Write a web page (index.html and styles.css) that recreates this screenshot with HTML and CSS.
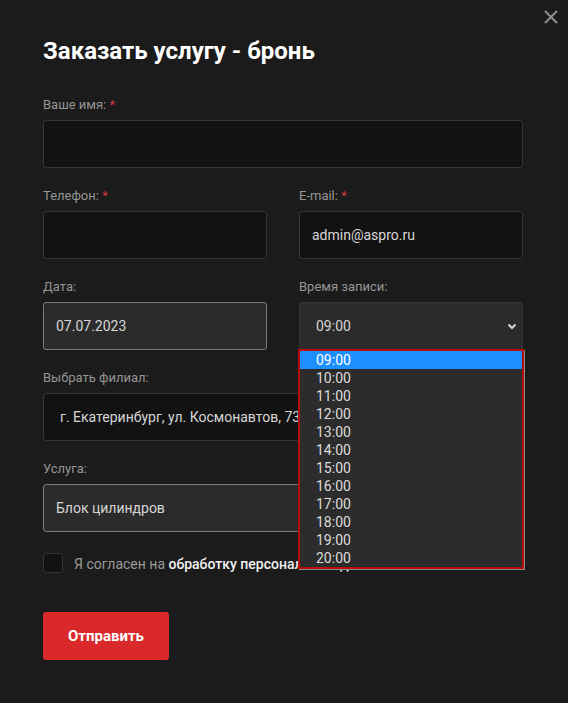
FILE: index.html
```html
<!DOCTYPE html>
<html lang="ru">
<head>
    <meta charset="UTF-8">
    <meta name="viewport" content="width=device-width, initial-scale=1.0">
    <title>Заказать услугу - бронь</title>
    <link rel="stylesheet" href="styles.css">
</head>
<body>
    <div class="popup">
        <a href="javascript:;" class="popup_close">
            <svg width="14" height="14" viewBox="0 0 14 14">
                <path d="M1 1L13 13M13 1L1 13" stroke="#8f8f8f" stroke-width="2" fill="none"/>
            </svg>
        </a>
        <h2 class="popup_title">Заказать услугу - бронь</h2>
        <form class="form">
            <div class="form_group">
                <label class="form_label">Ваше имя: <span class="star">*</span></label>
                <input class="form_input" type="text">
            </div>
            <div class="form_row">
                <div class="form_group">
                    <label class="form_label">Телефон: <span class="star">*</span></label>
                    <input class="form_input" type="text">
                </div>
                <div class="form_group">
                    <label class="form_label">E-mail: <span class="star">*</span></label>
                    <input class="form_input" type="text" value="admin@aspro.ru">
                </div>
            </div>
            <div class="form_row">
                <div class="form_group">
                    <label class="form_label">Дата:</label>
                    <input class="form_input light active" type="text" value="07.07.2023">
                </div>
                <div class="form_group">
                    <label class="form_label">Время записи:</label>
                    <div class="select_wrap">
                        <div class="form_select light">
                            <span>09:00</span>
                            <svg width="10" height="7" viewBox="0 0 10 7">
                                <path d="M1.5 1.5L5 5L8.5 1.5" stroke="#d8d8d8" stroke-width="2" fill="none"/>
                            </svg>
                        </div>
                        <ul class="dropdown">
                            <li class="selected">09:00</li>
                            <li>10:00</li>
                            <li>11:00</li>
                            <li>12:00</li>
                            <li>13:00</li>
                            <li>14:00</li>
                            <li>15:00</li>
                            <li>16:00</li>
                            <li>17:00</li>
                            <li>18:00</li>
                            <li>19:00</li>
                            <li>20:00</li>
                        </ul>
                    </div>
                </div>
            </div>
            <div class="form_group">
                <label class="form_label">Выбрать филиал:</label>
                <div class="form_select filial">
                    <span>г. Екатеринбург, ул. Космонавтов, 73</span>
                </div>
            </div>
            <div class="form_group">
                <label class="form_label">Услуга:</label>
                <input class="form_input light active" type="text" value="Блок цилиндров">
            </div>
            <label class="agree">
                <span class="agree_box"></span>
                <span class="agree_text">Я согласен на <b>обработку персональных данных</b></span>
            </label>
            <button type="button" class="btn">Отправить</button>
        </form>
    </div>
</body>
</html>
```
FILE: styles.css
```css
html,body,ul,li,h2,form,div,span,input,button,label {
    padding: 0;
    margin: 0;
    box-sizing: border-box;
}
ul {
    list-style: none;
}
body {
    background-color: #1b1b1b;
    font-family: Roboto, "Liberation Sans", sans-serif;
    color: #d6d6d6;
}
.popup {
    position: relative;
    padding: 38px 45px 40px 43px;
}
.popup_close {
    position: absolute;
    top: 10px;
    right: 10px;
    width: 14px;
    height: 14px;
    display: block;
}
.popup_close svg {
    display: block;
}
.popup_title {
    font-size: 24px;
    line-height: 26px;
    font-weight: 700;
    color: #fff;
    margin-bottom: 33px;
}
.form_row {
    display: flex;
    gap: 32px;
}
.form_row > .form_group {
    flex: 1;
}
.form_group {
    margin-bottom: 20px;
}
.form_label {
    display: block;
    font-size: 13px;
    line-height: 16px;
    color: #959595;
    margin-bottom: 7px;
}
.star {
    color: #d23a3a;
}
.form_input,
.form_select {
    display: block;
    width: 100%;
    height: 48px;
    padding: 0 12px;
    border: 1px solid #353535;
    border-radius: 3px;
    background-color: #121212;
    color: #d6d6d6;
    font-family: Roboto, "Liberation Sans", sans-serif;
    font-size: 14px;
    outline: none;
}
.form_input.light,
.form_select.light {
    background-color: #2b2b2b;
}
.form_input.active {
    border-color: #7a7a7a;
}
.form_select {
    display: flex;
    align-items: center;
    justify-content: space-between;
    padding: 0 5px 0 16px;
    white-space: nowrap;
    overflow: hidden;
}
.form_select.filial {
    padding-left: 16px;
}
.select_wrap {
    position: relative;
}
.dropdown {
    position: absolute;
    top: 47px;
    left: -1px;
    right: -1px;
    z-index: 10;
    border: 2px solid #b80d0d;
    background-color: #2c2c2c;
    box-shadow: 1px 1px 0 #8a8a8a;
    font-size: 14px;
    line-height: 18px;
    color: #dcdcdc;
}
.dropdown li {
    padding-left: 16px;
    height: 18px;
}
.dropdown li.selected {
    background-color: #1e8fff;
    color: #fff;
}
.agree {
    display: flex;
    align-items: center;
    gap: 11px;
    margin-top: 21px;
    font-size: 14px;
    color: #9a9a9a;
}
.agree_box {
    flex: none;
    width: 20px;
    height: 20px;
    border: 1px solid #333;
    border-radius: 3px;
    background-color: #121212;
}
.agree_text {
    padding-top: 2px;
}
.agree_text b {
    font-weight: 500;
    color: #f0f0f0;
}
.btn {
    display: block;
    margin-top: 39px;
    width: 126px;
    height: 48px;
    border: none;
    border-radius: 3px;
    background-color: #d9292b;
    color: #fff;
    font-family: Roboto, "Liberation Sans", sans-serif;
    font-size: 15px;
    font-weight: 700;
}
```
